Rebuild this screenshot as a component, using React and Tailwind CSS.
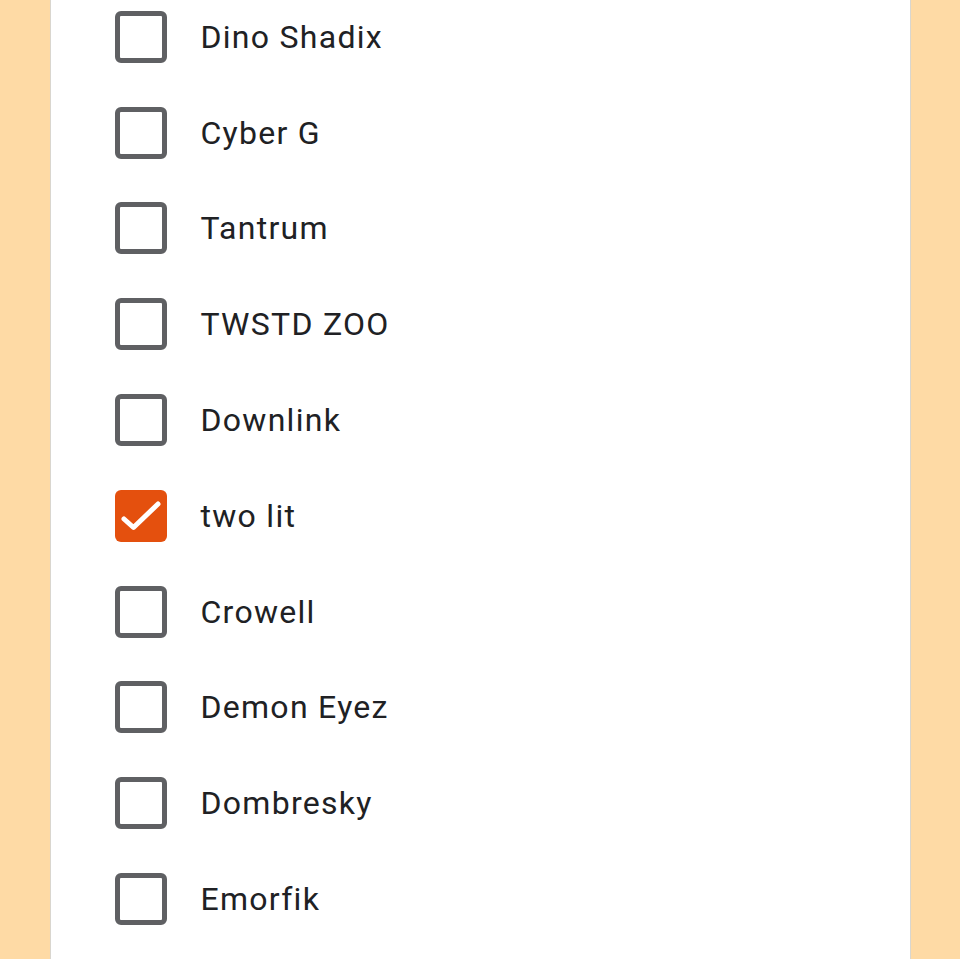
const items = [
  { label: 'Dino Shadix', checked: false },
  { label: 'Cyber G', checked: false },
  { label: 'Tantrum', checked: false },
  { label: 'TWSTD ZOO', checked: false },
  { label: 'Downlink', checked: false },
  { label: 'two lit', checked: true },
  { label: 'Crowell', checked: false },
  { label: 'Demon Eyez', checked: false },
  { label: 'Dombresky', checked: false },
  { label: 'Emorfik', checked: false },
];

function Box({ checked }) {
  if (checked) {
    return (
      <div className="w-[52px] h-[52px] rounded-[6px] bg-[#e4500e] shrink-0">
        <svg width="52" height="52" viewBox="0 0 52 52" fill="none">
          <path d="M9 29l9.5 8.5L43 14" stroke="#fff" strokeWidth="5" strokeLinecap="round" strokeLinejoin="round" />
        </svg>
      </div>
    );
  }
  return <div className="w-[52px] h-[52px] rounded-[6px] border-[5px] border-[#5f6063] bg-white shrink-0" />;
}

export default function App() {
  return (
    <div className="w-[960px] h-[959px] bg-[#fedaa5] overflow-hidden flex justify-center">
      <div className="w-[861px] h-full bg-white border-x border-[#d9d6cf] overflow-hidden">
        <ul className="mt-[-11px] pl-[64px]">
          {items.map((it) => (
            <li key={it.label} className="h-[95.8px] flex items-center gap-[34px]">
              <Box checked={it.checked} />
              <span className="text-[32px] tracking-[0.04em] text-[#202124] font-['Roboto',sans-serif] leading-none">{it.label}</span>
            </li>
          ))}
        </ul>
      </div>
    </div>
  );
}
